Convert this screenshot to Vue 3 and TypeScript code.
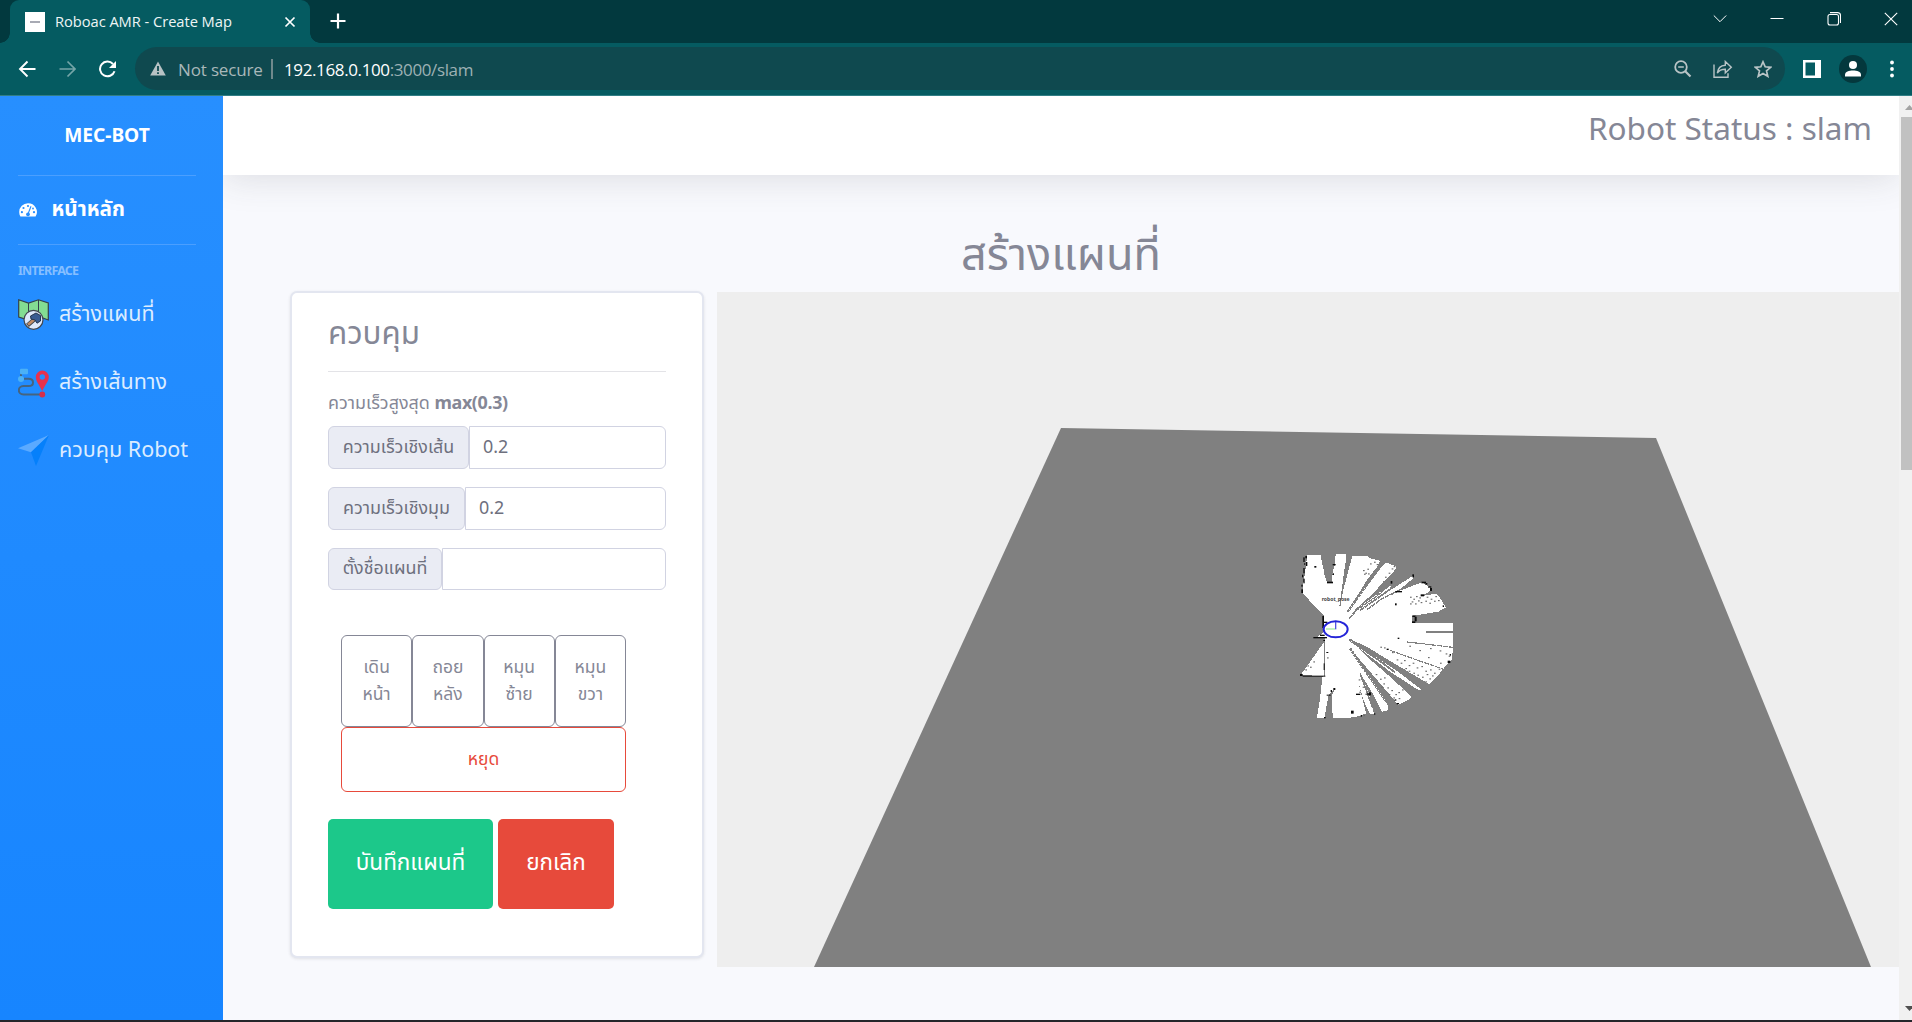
<script setup lang="ts">
interface SpeedField {
  label: string
  value: string
  width: number
}

const fields: SpeedField[] = [
  { label: 'ความเร็วเชิงเส้น', value: '0.2', width: 141 },
  { label: 'ความเร็วเชิงมุม', value: '0.2', width: 137 },
  { label: 'ตั้งชื่อแผนที่', value: '', width: 114 },
]

const moves: string[][] = [
  ['เดิน', 'หน้า'],
  ['ถอย', 'หลัง'],
  ['หมุน', 'ซ้าย'],
  ['หมุน', 'ขวา'],
]

// Occupied cells of the occupancy grid: x, y, width, height
const walls: number[][] = [
  [70, 52, 4, 14], [76, 48, 5, 7], [72, 70, 4, 4], [78, 66, 4, 12], [70, 84, 4, 16], [66, 104, 4, 8],
  [70, 116, 4, 14], [64, 134, 4, 6], [64, 148, 5, 11], [103, 78, 6, 5], [158, 72, 9, 4], [157, 100, 5, 5],
  [141, 125, 18, 5], [127, 228, 5, 36], [132, 245, 10, 4], [120, 284, 14, 4], [100, 291, 41, 4],
  [60, 402, 8, 6], [68, 407, 68, 3], [131, 370, 3, 20], [139, 336, 6, 3], [130, 300, 5, 3], [160, 444, 6, 6],
  [152, 450, 4, 6], [140, 464, 12, 3], [213, 512, 8, 9], [228, 461, 13, 4], [260, 460, 7, 4], [266, 457, 7, 9],
  [132, 531, 5, 4], [332, 123, 5, 8], [345, 190, 5, 6], [346, 153, 20, 4], [397, 103, 5, 9], [424, 125, 14, 5],
  [437, 129, 5, 5], [444, 139, 10, 4], [450, 144, 6, 9], [422, 163, 10, 6], [397, 226, 9, 5], [404, 230, 6, 14],
  [396, 244, 10, 5], [503, 362, 8, 7], [509, 342, 4, 5], [242, 525, 4, 5], [282, 520, 4, 4],
  [488, 196, 4, 5], [320, 326, 6, 4], [353, 293, 5, 4], [344, 478, 5, 4], [350, 489, 7, 4],
]

const specks: number[][] = [
  [249, 90], [256, 98], [262, 86], [270, 70], [282, 65], [290, 72], [264, 100], [252, 101], [335, 85], [326, 98],
  [315, 110], [341, 78], [390, 170], [400, 176], [408, 168], [418, 172], [440, 170], [452, 176], [466, 168],
  [395, 184], [405, 190], [422, 186], [436, 182], [448, 188], [462, 182], [474, 180], [390, 190], [414, 181],
  [450, 324], [479, 331], [444, 351], [497, 340], [418, 330], [388, 317], [336, 336], [350, 358], [362, 368],
  [372, 360], [386, 375], [398, 368], [410, 382], [424, 378], [436, 392], [450, 388], [462, 398], [476, 386],
  [386, 392], [400, 398], [412, 404], [426, 410], [440, 402], [448, 415], [436, 424], [456, 406], [376, 384],
  [301, 320], [312, 322], [287, 402], [300, 416], [310, 430], [322, 442], [334, 450], [346, 462], [356, 474],
  [303, 440], [326, 462], [340, 472], [312, 412], [236, 418], [248, 440], [256, 461], [238, 455], [82, 376],
  [76, 388], [90, 380], [100, 364], [141, 352], [250, 525], [355, 456], [366, 448], [480, 368], [506, 347],
]
</script>

<template>
  <div class="window">
    <header class="tabs">
      <div class="tab">
        <span class="favicon"><i></i></span>
        <span class="tab-title">Roboac AMR - Create Map</span>
        <svg class="tab-x" width="12" height="12" viewBox="0 0 12 12"><path d="M1.500 1.500l9 9M10.500 1.500l-9 9" stroke="#fff" stroke-width="1.700" /></svg>
      </div>
      <svg class="new-tab" width="16" height="16" viewBox="0 0 16 16"><path d="M8 .5v15M.5 8h15" stroke="#fff" stroke-width="2.200" /></svg>
      <div class="controls">
        <svg width="14" height="14" viewBox="0 0 14 14"><path d="M.8 3.500L7 9.700 13.200 3.500" stroke-width="1" /></svg>
        <svg width="14" height="14" viewBox="0 0 14 14"><path d="M.5 6.500h13" stroke-width="1" /></svg>
        <svg width="14" height="14" viewBox="0 0 14 14"><rect x="1" y="2.500" width="10.500" height="10.500" rx="2" /><path d="M3 .6h7.500a3 3 0 0 1 3 3V11" /></svg>
        <svg width="14" height="14" viewBox="0 0 14 14"><path d="M.8.8l12.400 12.400M13.200.8L.8 13.200" /></svg>
      </div>
    </header>

    <div class="toolbar">
      <svg class="nav" width="18" height="18" viewBox="0 0 18 18"><path d="M17.500 9H2.500M9.500 1.500L2 9l7.500 7.500" stroke="#fff" stroke-width="1.900" fill="none" /></svg>
      <svg class="nav" width="18" height="18" viewBox="0 0 18 18"><path d="M1.500 9h15M9.500 1.500L17 9l-7.500 7.500" stroke="#75a5a8" stroke-width="1.700" fill="none" /></svg>
      <svg class="nav" width="18" height="18" viewBox="0 0 18 18"><path d="M16.500 11.200A7.400 7.400 0 1 1 15 4" stroke="#fff" stroke-width="2" fill="none" /><path d="M18 1v7h-7z" fill="#fff" /></svg>
      <div class="address">
        <svg width="16" height="15" viewBox="0 0 16 15"><path d="M8 .5L15.800 14.500H.2z" fill="#b7c2c4" /><path d="M8 5v5M8 11.200v1.800" stroke="#0f494f" stroke-width="1.800" /></svg>
        <span class="insecure">Not secure</span>
        <i class="bar"></i>
        <span class="url"><b>192.168.0.100</b>:3000/slam</span>
        <span class="address-icons">
          <svg width="18" height="18" viewBox="0 0 18 18"><circle cx="7" cy="7" r="5.800" /><path d="M11.200 11.200l5.300 5.300" stroke-width="2.200" /><path d="M4.200 7h5.600" stroke-width="1.500" /></svg>
          <svg width="20" height="18" viewBox="0 0 20 18"><path d="M1 4.500v12.700h14v-4M4.300 13c.6-5 3.500-7.500 8-7.800V1.500l6 5.800-6 5.500V9.300c-3.800 0-6 .8-8 3.700z" stroke-width="1.400" /></svg>
          <svg width="18" height="18" viewBox="0 0 18 18"><path d="M9 1.800l2.200 5 5.500.5-4.200 3.600 1.300 5.400L9 13.400l-4.800 2.900 1.300-5.400L1.300 7.300l5.500-.5z" stroke-width="1.700" /></svg>
        </span>
      </div>
      <svg class="panel-icon" width="18" height="18" viewBox="0 0 18 18"><path fill-rule="evenodd" d="M0 0h18v18H0zM2.500 2.500v13H12v-13z" fill="#fff" /></svg>
      <svg class="avatar" width="28" height="28" viewBox="0 0 28 28"><circle cx="14" cy="14" r="14" fill="#04383d" /><circle cx="14" cy="10" r="4" fill="#fff" /><path d="M6 21.500v-1.700c0-3 4-4.300 8-4.300s8 1.300 8 4.300v1.700z" fill="#fff" /></svg>
      <svg class="kebab" width="4" height="18" viewBox="0 0 4 18"><g fill="#fff"><circle cx="2" cy="2.500" r="1.900" /><circle cx="2" cy="9" r="1.900" /><circle cx="2" cy="15.500" r="1.900" /></g></svg>
    </div>

    <div class="page">
      <aside class="sidebar">
        <div class="brand">MEC-BOT</div>
        <div class="home">
          <svg width="18" height="14" viewBox="0 0 18 14"><path d="M9 .2A8.800 8.800 0 0 0 .2 9c0 1.700.4 3.200 1.200 4.600h15.200A8.800 8.800 0 0 0 9 .2z" fill="#fff" /><g fill="#268eff"><circle cx="9" cy="3" r="1.100" /><circle cx="4.500" cy="5" r="1.100" /><circle cx="2.900" cy="9.200" r="1.100" /><circle cx="15" cy="9.200" r="1.100" /><circle cx="14" cy="5.500" r=".9" /><circle cx="9" cy="11.300" r="1.900" /></g><path d="M9 11l3-7.800" stroke="#268eff" stroke-width="1.100" /></svg>
          <span>หน้าหลัก</span>
        </div>
        <div class="section">INTERFACE</div>
        <nav>
          <a>
            <svg width="31" height="31" viewBox="0 0 31 31"><path d="M.7.8L10.500 4 20.500.8 30.300 4v17L20.500 17.500 10.500 21 .7 18z" fill="#83dd92" stroke="#34414c" stroke-width="1.200" /><path d="M10.500 4v16M20.500 1v14" stroke="#34414c" /><circle cx="15.500" cy="20.800" r="9.500" fill="#dfe9fa" stroke="#42474f" stroke-width="1.200" /><path d="M9.500 26.300l7.500-6.500" stroke="#34414c" stroke-width="4.200" /><path d="M10 25.800l7-6" stroke="#c28b65" stroke-width="2.800" /><path d="M12.500 17l5.500-3 4.500 2.500v5.500l-3.500 2.200-2-3.200-4-1z" fill="#385b91" stroke="#26364e" /></svg>
            <span>สร้างแผนที่</span>
          </a>
          <a>
            <svg width="31" height="31" viewBox="0 0 31 31"><path d="M3 6v5M6 11.800h4.500c6 0 6 7.200 0 7.200H5.500c-6.200 0-6.200 8.500 0 8.500H24" fill="none" stroke="#46647f" stroke-width="2" /><rect x="2" y="1.800" width="8" height="5.400" rx="1" fill="#4bb1f6" /><circle cx="3" cy="12" r="3" fill="#4bb1f6" /><path d="M24.200 24C20.500 16.500 17.800 14 17.800 10a6.500 6.500 0 0 1 13 0c0 4-2.900 6.500-6.600 14z" fill="#e7314e" /><circle cx="24.300" cy="10" r="2.700" fill="#268eff" /><circle cx="24.300" cy="27.500" r="2.900" fill="#d42f4c" /></svg>
            <span>สร้างเส้นทาง</span>
          </a>
          <a>
            <svg width="31" height="31" viewBox="0 0 31 31"><path d="M31 0L0 13.200l13 4z" fill="#5baaff" /><path d="M31 0L13 17.200 18 31z" fill="#0580fb" /></svg>
            <span>ควบคุม Robot</span>
          </a>
        </nav>
      </aside>

      <main class="content">
        <div class="topbar"><span>Robot Status : slam</span></div>
        <h1>สร้างแผนที่</h1>
        <div class="workspace">
          <section class="card">
            <h2>ควบคุม</h2>
            <p class="hint">ความเร็วสูงสุด <b>max(0.3)</b></p>
            <div v-for="f in fields" :key="f.label" class="group">
              <span class="addon" :style="{ width: f.width + 'px' }">{{ f.label }}</span>
              <span class="input">{{ f.value }}</span>
            </div>
            <div class="pad">
              <div class="moves">
                <button v-for="(m, i) in moves" :key="i">{{ m[0] }}<br />{{ m[1] }}</button>
              </div>
              <button class="stop">หยุด</button>
            </div>
            <div class="actions">
              <button class="save">บันทึกแผนที่</button>
              <button class="cancel">ยกเลิก</button>
            </div>
          </section>

          <svg class="viewer" width="1182" height="675" viewBox="0 0 1182 675">
            <rect width="1182" height="675" fill="#eee" />
            <path d="M344 136L939 146 1154 675H97z" fill="#808080" />
            <g transform="translate(563 248) scale(.33333)">
              <path
                shape-rendering="crispEdges" fill="#fff"
                d="M82 45L122 45 126 68 131 90 134 108 141 128H155L157 100 164 75 167 43H197V65L193 90 189 120 180 198 190 150 203 100 217 47H262L270 55 300 62 290 82 262 118 240 155 202 212 235 172 270 122 290 95 318 67 350 80 340 96 310 125 285 155 222 212 335 131 330 145 245 205 400 107V115L350 156 425 127 452 143V152L425 168 470 161 485 180 497 203 475 215 395 228V250H520V318L515 360 505 368 470 412 447 432 350 375 260 320 207 296 260 332 350 392 424 449 415 450 330 395 225 315 270 358 330 410 395 470 385 480 355 495 330 465 210 325 245 380 300 450 325 500 322 512 305 515 283 470 260 430 240 400 265 455 282 522H270L250 480 232 415 248 480 258 520 240 528 200 535H158L156 465 164 447 146 465 139 500 134 535H110L118 490 128 408 62 405 80 380 135 302V292L112 291 133 275V228L100 195 68 158 70 130 76 90z"
              />
              <g fill="none" stroke="#808080" stroke-width="4.500" shape-rendering="crispEdges">
                <path d="M439 276h81M382 306l51 6 86 10M330 331l55 20 106 37" stroke-dasharray="16 2" stroke-width="3.500" />
                <path d="M207 235l30-32M225 213l55-37 55-45M240 211l40-27 52-37M262 208l43-31 55-27" stroke-dasharray="14 2" />
                <path d="M202 216l55-77 43-58M208 298l38 27 51 35 71 29 56 35M210 325l32 48 46 66 30 45" stroke-dasharray="9 2" stroke-width="7" />
                <path d="M215 305l60 40 70 52M240 400l15 40 22 60" stroke-width="5" />
                <path d="M180 198l8-58M133 300v108" stroke-width="3.500" />
              </g>
              <rect v-for="(s, i) in specks" :key="'s' + i" :x="s[0]" :y="s[1]" width="5" height="3.500" fill="#6c6c6c" />
              <rect v-for="(w, i) in walls" :key="'w' + i" :x="w[0]" :y="w[1]" :width="w[2]" :height="w[3]" fill="#0a0a0a" />
              <text x="125" y="184" class="label" textLength="84" lengthAdjust="spacingAndGlyphs">robot_pose</text>
              <path d="M138 267h27" stroke="#a6efa6" stroke-width="4" />
              <path d="M167 268v-22" stroke="#5656e0" stroke-width="4" />
              <ellipse cx="167" cy="268" rx="36" ry="24" fill="none" stroke="#2424d8" stroke-width="6" />
            </g>
          </svg>
        </div>
      </main>

      <div class="scroll">
        <svg class="up" width="9" height="5" viewBox="0 0 9 5"><path d="M0 5l4.500-5L9 5z" fill="#a3a3a3" /></svg>
        <i class="thumb"></i>
        <svg class="down" width="9" height="5" viewBox="0 0 9 5"><path d="M0 0h9L4.500 5z" fill="#505050" /></svg>
      </div>
    </div>
  </div>
</template>

<style>
body { margin: 0; overflow: hidden; }
</style>

<style scoped>
* { box-sizing: border-box; }
svg { display: block; flex: none; }
button { font: inherit; margin: 0; padding: 0; white-space: nowrap; }
.window { width: 1912px; height: 1022px; display: flex; flex-direction: column; background: #24252a; font-family: "Noto Sans", "Noto Sans Thai", sans-serif; overflow: hidden; }
.tabs { height: 43px; flex: none; display: flex; background: #02393e; padding-left: 10px; }
.tab { position: relative; width: 300px; height: 43px; background: #055b61; border-radius: 9px 9px 0 0; display: flex; align-items: center; padding: 0 14px 0 15px; }
.tab::before, .tab::after { content: ""; position: absolute; bottom: 0; width: 10px; height: 10px; }
.tab::before { left: -10px; background: radial-gradient(circle at 0 0, transparent 9.500px, #055b61 10px); }
.tab::after { right: -10px; background: radial-gradient(circle at 100% 0, transparent 9.500px, #055b61 10px); }
.favicon { width: 20px; height: 20px; background: #fff; display: flex; align-items: center; justify-content: center; }
.favicon i { width: 10px; height: 2px; background: #a8aab4; }
.tab-title { margin-left: 10px; font: 14.700px "Open Sans", sans-serif; letter-spacing: -.05px; color: #eef5f5; white-space: nowrap; flex: 1; position: relative; top: -1px; }
.new-tab { margin: 13px 0 0 20px; }
.controls { margin-left: auto; display: flex; gap: 43px; padding: 12px 14px 0 0; }
.controls svg { fill: none; stroke: #fff; stroke-width: 1.100; }
.toolbar { height: 53px; flex: none; display: flex; align-items: center; background: #055b61; border-bottom: 1px solid #317e85; padding: 0 0 1px 18px; }
.nav { margin-right: 22px; }
.address { margin-left: -3px; width: 1650px; height: 43px; border-radius: 22px; background: #0f494f; display: flex; align-items: center; padding: 0 13px 0 15px; font: 17px "Open Sans", sans-serif; color: #a9b8ba; white-space: nowrap; }
.address span { position: relative; top: .5px; }
.insecure { margin-left: 12px; width: 84px; letter-spacing: -.15px; }
.bar { width: 2px; height: 20px; margin: 0 11px 0 9px; background: #70898c; }
.url { color: #9db1b4; letter-spacing: -.38px; }
.url b { font-weight: 400; color: #fff; }
.address-icons { margin-left: auto; display: flex; align-items: center; gap: 21px; }
.address-icons svg { fill: none; stroke: #b9c4c6; stroke-width: 1.800; }
.panel-icon { margin-left: 18px; }
.avatar { margin-left: 18px; }
.kebab { margin-left: 23px; }
.page { height: 924px; display: flex; background: #f8f9fd; color: #858796; }
.sidebar { width: 223px; flex: none; background: linear-gradient(#278fff, #1785ff); padding: 0 27px 0 18px; color: #fff; }
.brand { height: 80px; border-bottom: 1px solid #4b9fff; text-align: center; font-weight: 700; font-size: 19.200px; line-height: 78px; letter-spacing: -.05px; }
.home { height: 69px; border-bottom: 1px solid #4b9fff; display: flex; align-items: center; padding-left: 1px; font-weight: 700; font-size: 20.700px; }
.home span { margin-left: 14.500px; position: relative; top: -1px; }
.section { height: 50px; line-height: 52px; font-size: 12.500px; font-weight: 700; letter-spacing: -.8px; color: #86bfff; }
nav a { height: 68px; display: flex; align-items: flex-start; padding-top: 4px; font-size: 21.500px; line-height: 27px; color: #dcecff; white-space: nowrap; }
nav span { margin-left: 10px; }
.content { width: 1676px; display: flex; flex-direction: column; }
.topbar { height: 79px; flex: none; background: #fff; box-shadow: 0 3px 36px rgba(58, 59, 69, .15); display: flex; justify-content: flex-end; padding: 8px 27px 0 0; font-size: 31.500px; line-height: 47px; clip-path: inset(0 0 -60px 0); }
h1 { margin: 0; height: 117px; padding: 47px 0 0; font-size: 45px; line-height: 62px; font-weight: 400; text-align: center; }
.workspace { display: flex; padding-left: 67px; gap: 13px; align-items: flex-start; }
.card { width: 414px; height: 667px; margin-top: -1px; background: #fff; border: 2px solid #e3e6f0; border-radius: 7px; box-shadow: 0 1px 3px rgba(58, 59, 69, .12); padding: 14px 36px 0 36px; }
h2 { margin: 0; height: 65px; border-bottom: 1px solid #e3e3e7; font-size: 31.300px; line-height: 50px; font-weight: 400; }
.hint { margin: 15px 0 9px; height: 30px; line-height: 30px; font-size: 17.900px; white-space: nowrap; }
.hint b { letter-spacing: -.35px; }
.group { display: flex; height: 43px; margin-bottom: 18px; font-size: 17.900px; line-height: 39px; color: #6e707e; }
.group:nth-of-type(3) { height: 42px; line-height: 37px; }
.addon { border: 1px solid #d1d3e2; border-radius: 6px; background: #eaecf4; text-align: center; white-space: nowrap; }
.input { flex: 1; border: 1px solid #d1d3e2; border-radius: 0 6px 6px 0; padding-left: 13px; }
.pad { width: 285px; margin: 45px 0 0 13px; }
.moves { display: flex; }
.moves button { flex: 1; height: 92px; background: #fff; border: 1px solid #858796; border-radius: 6px; color: #858796; font-size: 17.500px; line-height: 27px; padding-bottom: 3px; }
.stop { display: block; width: 285px; height: 65px; background: #fff; border: 1px solid #e74a3b; border-radius: 6px; color: #e74a3b; font-size: 17.500px; }
.actions { display: flex; gap: 5px; margin-top: 27px; }
.actions button { height: 90px; border: 0; border-radius: 5px; color: #fff; font-size: 22.500px; padding-bottom: 3px; }
.actions .save { width: 165px; background: #1cc88a; }
.actions .cancel { width: 116px; background: #e74a3b; }
.viewer { background: #eee; }
.label { font-size: 18px; font-weight: 700; fill: #444; font-family: "Noto Sans", sans-serif; }
.scroll { width: 13px; background: #f1f1f1; display: flex; flex-direction: column; align-items: flex-end; padding: 9px 0; overflow: hidden; }
.up, .down { margin-right: -2px; }
.thumb { width: 11px; height: 353px; margin-top: 7px; background: #c1c1c1; }
.down { margin-top: auto; }
</style>
